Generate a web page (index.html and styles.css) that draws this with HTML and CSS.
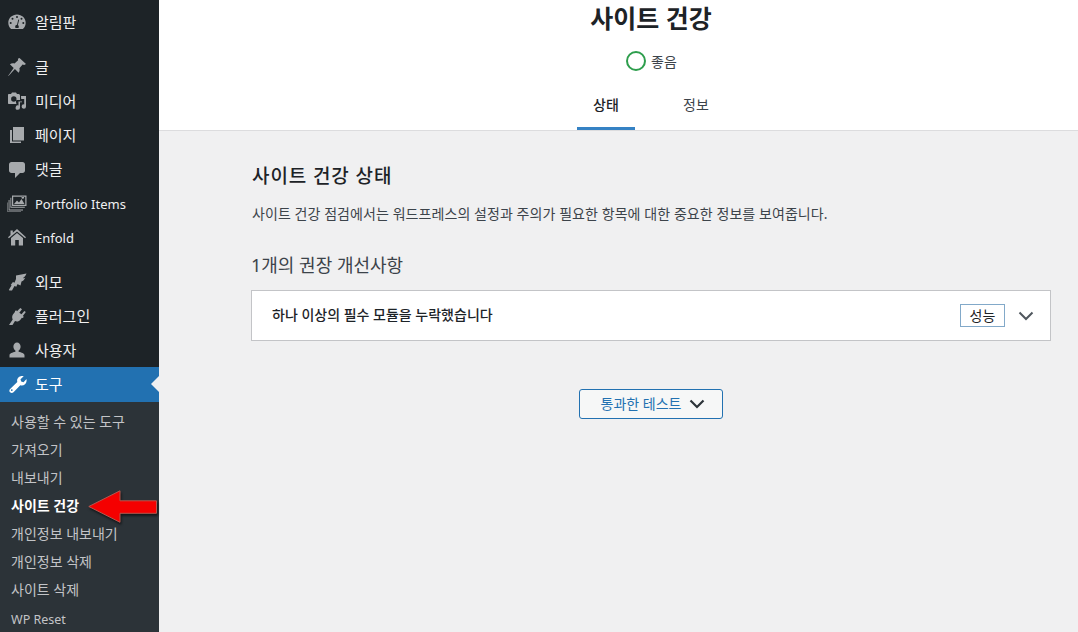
FILE: index.html
```html
<!DOCTYPE html>
<html lang="ko">
<head>
<meta charset="utf-8">
<title>사이트 건강</title>
<link rel="stylesheet" href="styles.css">
</head>
<body>
<div class="app">
  <nav class="sidebar">
    <ul class="menu">
      <li class="item"><svg class="icon" viewBox="0 0 20 20"><path fill-rule="evenodd" d="M10 2.500c-4.700 0-8.700 3.600-8.700 8.200 0 2.500 1 4.700 2.800 6.300h11.800c1.800-1.600 2.800-3.800 2.800-6.300 0-4.600-4-8.200-8.700-8.200zM10 4a1 1 0 1 1 0 2 1 1 0 0 1 0-2zM5.500 5.800a1 1 0 1 1 0 2 1 1 0 0 1 0-2zM14.500 5.800a1 1 0 1 1 0 2 1 1 0 0 1 0-2zM3.700 10a1 1 0 1 1 0 2 1 1 0 0 1 0-2zM16.300 10a1 1 0 1 1 0 2 1 1 0 0 1 0-2zM11.300 7.500l.9.3-1.300 5.300c.6.400.9 1 .9 1.600 0 .5-.2.900-.4 1.300H8.600c-.3-.4-.4-.8-.4-1.300 0-1 .8-1.800 1.800-1.900z"/></svg><span class="label">알림판</span></li>
      <li class="item group-start-b"><svg class="icon" viewBox="0 0 20 20"><path d="M12.500 1l6.500 6-1.800.9-1.600-.3-3.200 3.600c.5 1.800.2 3.300-.8 4.500L7.900 12 1.500 19l-.3-.3 5.500-7.800-3.800-3.600c1.300-1 2.900-1.300 4.600-.8l3.600-3.200-.2-1.600z"/></svg><span class="label">글</span></li>
      <li class="item"><svg class="icon" viewBox="0 0 20 20"><path fill-rule="evenodd" d="M2 3h2l1-1.500h4L10 3h1.500c.8 0 1.500.7 1.500 1.500V9H9v2c0 .7.200 1.400.5 2H2c-.6 0-1-.4-1-1V4c0-.6.400-1 1-1zm4.800 2.300a2.700 2.700 0 1 0 0 5.400 2.700 2.700 0 0 0 0-5.400zM14 5h5v10.500a2.200 2.200 0 1 1-1.800-2.100V8h-3zM11.500 10.500H15v.8h-2v5.200a2.200 2.200 0 1 1-1.500-2z"/></svg><span class="label">미디어</span></li>
      <li class="item"><svg class="icon" viewBox="0 0 20 20"><path d="M6 2h11v13.500H6z"/><path d="M3 5h2v11.500h9V18H3z"/></svg><span class="label">페이지</span></li>
      <li class="item"><svg class="icon" viewBox="0 0 20 20"><path d="M4.500 3h11C16.900 3 18 4.100 18 5.500v6c0 1.400-1.100 2.500-2.500 2.500H13l-5 5v-5H4.500C3.100 14 2 12.900 2 11.500v-6C2 4.100 3.100 3 4.500 3z"/></svg><span class="label">댓글</span></li>
      <li class="item"><svg class="icon" viewBox="0 0 20 20"><path fill-rule="evenodd" d="M5 2.500h14.500V13H5zM6.200 3.700v8.100h12.100V3.700zM7 11l3-3.500 2 2 2.500-3.500 3 5zM14.500 4.500a1.300 1.300 0 1 1 2.600 0 1.300 1.300 0 0 1-2.600 0zM3.400 4.800h.9v9h13.500v1H3.400zM1.600 7h.9v9.500H16v1H1.600zM.5 9.500h.5v9h13v.5H.5z"/></svg><span class="latin">Portfolio Items</span></li>
      <li class="item"><svg class="icon" viewBox="0 0 20 20"><path d="M10 2l9 8.200-.9 1L10 4.500 1.900 11.200l-.9-1 2.500-2.300V3.500h2.300v2.300z"/><path d="M10 6l6 5v7.500h-4.200V13H8.200v5.500H4V11z"/></svg><span class="latin">Enfold</span></li>
      <li class="item group-start-c"><svg class="icon" viewBox="0 0 20 20"><path d="M9 3.500l10.500-2c-.8 2.200-2 3.500-3.500 4.500.8.300 1.500.2 2.200-.2-.8 2-2.100 3.200-3.700 3.700l-1 4-6-2.700 1.500-3.800zM5.900 10l4.600 2.100-1.200 2.700-1.800-.7L5 18.500H2.500l-.7-.4 2.800-4.800-.9-.4z"/></svg><span class="label">외모</span></li>
      <li class="item"><svg class="icon" viewBox="0 0 20 20"><path d="M13.300 2l1.700 1.200-2.700 3.500 2.200 1.600 2.800-3.400 1.500 1.200-3 3.800 1 .8-.9 1.200-1-.1-1.500 2c-1.300 1.700-3.500 2.200-5.400 1.300L5.500 19H2l3.700-5.500C4.800 11.700 5 9.500 6.300 8l1.600-2 .1-1 1.200-.8.800 1z"/></svg><span class="label">플러그인</span></li>
      <li class="item"><svg class="icon" viewBox="0 0 20 20"><path d="M10 2.500c2 0 3.600 1.700 3.600 4 0 2-1 3.400-2 4.100v1.200c2.900.6 5.900 1.700 5.900 3.500v2.200H2.500v-2.200c0-1.800 3-2.900 5.900-3.500v-1.200c-1-.7-2-2.100-2-4.100 0-2.300 1.600-4 3.600-4z"/></svg><span class="label">사용자</span></li>
      <li class="item current"><svg class="icon" viewBox="0 0 20 20"><path d="M16.700 2.200l-3.200 3 .7 2.300 2.300.7 3-3.200c.4 2.200-.2 4.100-1.500 5.200-1.300 1.200-3 1.500-4.700 1L6.500 18.200c-1 1-2.400 1-3.400.1s-1-2.400 0-3.400l7.200-6.800c-.5-1.700-.1-3.400 1.100-4.600 1.300-1.300 3.300-1.800 5.300-1.300zM4.800 15.200a.9.900 0 1 0 0 1.800.9.900 0 0 0 0-1.800z"/></svg><span class="label">도구</span><i class="notch"></i></li>
    </ul>
    <ul class="submenu">
      <li>사용할 수 있는 도구</li>
      <li>가져오기</li>
      <li>내보내기</li>
      <li class="active">사이트 건강</li>
      <li>개인정보 내보내기</li>
      <li>개인정보 삭제</li>
      <li>사이트 삭제</li>
      <li class="latin-sub">WP Reset</li>
    </ul>
    <svg class="arrow" viewBox="0 0 70 33"><path d="M.8 16.500L32 .8v10h36.500v12.500H32v9z"/></svg>
  </nav>
  <main class="main">
    <header class="header">
      <h1 class="title">사이트 건강</h1>
      <div class="status"><span class="ring"></span><span>좋음</span></div>
      <div class="tabs">
        <a class="tab tab-active">상태</a>
        <a class="tab">정보</a>
      </div>
    </header>
    <section class="content">
      <h2 class="heading">사이트 건강 상태</h2>
      <p class="desc">사이트 건강 점검에서는 워드프레스의 설정과 주의가 필요한 항목에 대한 중요한 정보를 보여줍니다.</p>
      <h3 class="count">1개의 권장 개선사항</h3>
      <div class="card">
        <span class="card-title">하나 이상의 필수 모듈을 누락했습니다</span>
        <span class="badge">성능</span>
        <svg class="chev" viewBox="0 0 16 10"><path d="M1.500 1.500L8 8l6.500-6.500"/></svg>
      </div>
      <div class="actions">
        <button class="btn"><span class="btn-label">통과한 테스트</span><svg class="chev chev-btn" viewBox="0 0 16 10"><path d="M1.500 1.500L8 8l6.500-6.500"/></svg></button>
      </div>
    </section>
  </main>
</div>
</body>
</html>
```
FILE: styles.css
```css
* { box-sizing: border-box; }
html, body { margin: 0; height: 632px; overflow: hidden; }
body {
  font-family: "Noto Sans", "Noto Sans CJK KR", sans-serif;
  background: #f0f0f1;
  color: #1d2327;
}
ul { list-style: none; margin: 0; padding: 0; }
.app { display: flex; height: 632px; }
.sidebar { position: relative; width: 159px; flex: none; background: #1d2327; height: 632px; }
.menu { padding-top: 5px; }
.item {
  position: relative;
  display: flex;
  align-items: center;
  height: 34px;
  padding-left: 7px;
  color: #f0f0f1;
  font-size: 15px;
  gap: 8px;
}
.label { padding-bottom: 2px; }
.latin { font-size: 13px; padding-top: 2px; }
.group-start-b { margin-top: 11px; }
.group-start-c { margin-top: 11px; }
.icon { width: 20px; height: 20px; fill: #a7aaad; flex: none; }
.current { background: #2271b1; color: #fff; height: 35px; padding-bottom: 1px; }
.current .icon { fill: #fff; }
.notch {
  position: absolute;
  right: 0;
  top: 9px;
  border: 8px solid transparent;
  border-right-color: #f0f0f1;
  border-left-width: 0;
}
.submenu { background: #2c3338; padding-top: 5px; height: 230px; }
.submenu li {
  display: flex;
  align-items: center;
  height: 28px;
  padding-left: 11px;
  font-size: 14px;
  color: #c3c4c7;
}
.submenu .latin-sub { font-size: 12.500px; padding-top: 5px; }
.submenu .active { color: #fff; font-weight: 700; }
.arrow {
  position: absolute;
  left: 88px;
  top: 490px;
  width: 70px;
  height: 33px;
  filter: drop-shadow(1px 2px 1px rgba(0,0,0,.55));
}
.arrow path { fill: #f50000; stroke: #b5584f; stroke-width: 1; }
.main { flex: 1; min-width: 0; }
.header {
  display: flex;
  flex-direction: column;
  align-items: center;
  height: 131px;
  padding-left: 65px;
  background: #fff;
  border-bottom: 1px solid #dcdcde;
}
.title { margin: 0; font-size: 25px; line-height: 36px; font-weight: 600; }
.status {
  display: flex;
  align-items: center;
  gap: 5px;
  height: 24px;
  margin-top: 13px;
  padding-left: 1px;
  font-size: 14px;
  color: #3c434a;
}
.ring { width: 20px; height: 20px; border: 2px solid #2e9e4d; border-radius: 50%; }
.tabs { display: flex; gap: 32px; margin-top: auto; }
.tab {
  display: flex;
  justify-content: center;
  align-items: center;
  width: 58px;
  height: 51px;
  padding-top: 2px;
  font-size: 14px;
  color: #3c434a;
  border-bottom: 3px solid transparent;
}
.tab-active { border-bottom-color: #3582c4; color: #1d2327; font-weight: 500; }
.content { width: 800px; margin-left: 92px; padding-top: 32px; }
.heading { margin: 0; padding-left: 1px; font-size: 19px; line-height: 26px; font-weight: 500; letter-spacing: .9px; }
.desc { margin: 15px 0 0; padding-left: 1px; font-size: 14px; line-height: 20px; letter-spacing: .07px; color: #3c434a; }
.count { margin: 28px 0 0; font-size: 18px; line-height: 26px; font-weight: 400; color: #3c434a; }
.card {
  display: flex;
  align-items: center;
  height: 51px;
  margin-top: 12px;
  padding: 0 16px 0 20px;
  background: #fff;
  border: 1px solid #c3c4c7;
  font-size: 14px;
}
.card-title { flex: 1; font-weight: 500; padding-bottom: 3px; }
.badge {
  display: flex;
  align-items: center;
  justify-content: center;
  width: 45px;
  height: 23px;
  padding-bottom: 2px;
  border: 1px solid #82a9c9;
  font-size: 14px;
  margin-right: 13px;
}
.chev { width: 16px; height: 10px; fill: none; stroke: #50575e; stroke-width: 2; }
.actions { display: flex; justify-content: center; margin-top: 48px; }
.btn {
  display: flex;
  align-items: center;
  justify-content: center;
  gap: 8px;
  width: 144px;
  height: 30px;
  padding: 0 0 0 4px;
  border: 1px solid #2271b1;
  border-radius: 3px;
  background: #f6f7f7;
  color: #2271b1;
  font: inherit;
  font-size: 14px;
}
.btn-label { padding-bottom: 2px; }
.chev-btn { stroke: #2c3338; stroke-width: 2.200; }
```
